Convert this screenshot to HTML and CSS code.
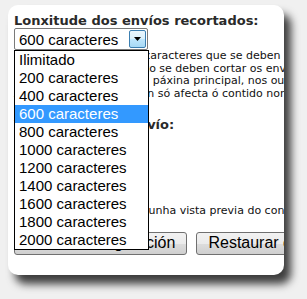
FILE: index.html
```html
<!DOCTYPE html>
<html lang="gl">
<head>
    <meta charset="UTF-8">
    <title>Opcións</title>
    <link rel="stylesheet" href="styles.css">
</head>
<body>
    <div class="card">
        <div class="panel">
            <h2 class="label">Lonxitude dos envíos recortados:</h2>

            <div class="select-wrap">
                <div class="select">
                    <span class="select-value">600 caracteres</span>
                    <span class="select-arrow">
                        <svg width="7" height="4" viewBox="0 0 7 4"><path d="M0 0h7L3.5 4z" fill="#000"/></svg>
                    </span>
                </div>
                <!-- open list, lies over the text below -->
                <ul class="dropdown">
                    <li>Ilimitado</li>
                    <li>200 caracteres</li>
                    <li>400 caracteres</li>
                    <li class="active">600 caracteres</li>
                    <li>800 caracteres</li>
                    <li>1000 caracteres</li>
                    <li>1200 caracteres</li>
                    <li>1400 caracteres</li>
                    <li>1600 caracteres</li>
                    <li>1800 caracteres</li>
                    <li>2000 caracteres</li>
                </ul>
            </div>

            <p class="help">
                Establece o número de caracteres que se deben mostrar nos envíos.<br>
                Indica que punto do texto se deben cortar os envíos longos<br>
                cando son mostrados na páxina principal, nos outros feeds.<br>
                Atención: a configuración só afecta ó contido non lido.
            </p>

            <h2 class="label second">Vista previa do envío:</h2>

            <div class="select small">
                <span class="select-value">Activada</span>
            </div>
            <label class="check"><input type="checkbox"> Con imaxes</label>

            <p class="help last">Indica se quere mostrar unha vista previa do contido dos envíos.</p>

            <div class="buttons">
                <button class="btn">Gardar configuración</button>
                <button class="btn">Restaurar configuración</button>
            </div>
        </div>
    </div>
</body>
</html>
```

FILE: styles.css
```css
* {
    margin: 0;
    padding: 0;
    box-sizing: border-box;
}

body {
    background-color: #f0f0f0;
    font-family: "DejaVu Sans", Verdana, sans-serif;
    width: 307px;
    height: 299px;
    overflow: hidden;
}

.card {
    margin: 5px 0 0 8px;
    width: 276px;
    height: 270px;
    background-color: #fff;
    border-radius: 10px;
    box-shadow: 7px 9px 8px rgba(0, 0, 0, 0.75);
    overflow: hidden;
    padding: 8px 0 0 6px;
}

.panel {
    width: 420px;
}

.label {
    font-size: 13px;
    font-weight: bold;
    color: #2a2a2a;
    line-height: 15px;
    white-space: nowrap;
}

.label.second {
    margin-top: 17px;
}

.select-wrap {
    position: relative;
}

.select {
    width: 134px;
    height: 22px;
    border: 1px solid #7a7a7a;
    border-radius: 2px;
    background-color: #fff;
    display: flex;
    align-items: center;
    justify-content: space-between;
    padding: 1px 1px 1px 4px;
    font-family: "Liberation Sans", Arial, sans-serif;
    font-size: 15px;
    color: #000;
}

.select.small {
    margin-top: 4px;
}

.select-arrow {
    width: 17px;
    height: 18px;
    border: 1px solid #3c7fb1;
    border-radius: 2px;
    background: linear-gradient(#eaf6fd, #d9f0fc 50%, #bee6fd 51%, #a7d9f5);
    display: flex;
    align-items: center;
    justify-content: center;
}

.dropdown {
    position: absolute;
    top: 22px;
    left: 0;
    width: 135px;
    list-style: none;
    background-color: #fff;
    border: 1px solid #000;
    font-family: "Liberation Sans", Arial, sans-serif;
    font-size: 15px;
    color: #000;
    z-index: 2;
}

.dropdown li {
    height: 18px;
    line-height: 18px;
    padding-left: 4px;
}

.dropdown li.active {
    background-color: #3399ff;
    color: #fff;
}

.help {
    font-size: 11px;
    line-height: 12.5px;
    color: #111;
    white-space: nowrap;
}

.help.last {
    margin-top: 24px;
}

.check {
    display: block;
    margin-top: 10px;
    height: 13px;
    font-size: 11px;
    color: #111;
}

.check input {
    width: 11px;
    height: 11px;
    vertical-align: -1px;
}

.buttons {
    display: flex;
    gap: 9px;
    margin-top: 14px;
}

.btn {
    height: 23px;
    padding: 0 11px;
    border: 1px solid #707070;
    border-radius: 3px;
    background: linear-gradient(#f2f2f2, #ebebeb 50%, #dddddd 51%, #cfcfcf);
    font-family: "Liberation Sans", Arial, sans-serif;
    font-size: 16px;
    color: #000;
    white-space: nowrap;
}
```
